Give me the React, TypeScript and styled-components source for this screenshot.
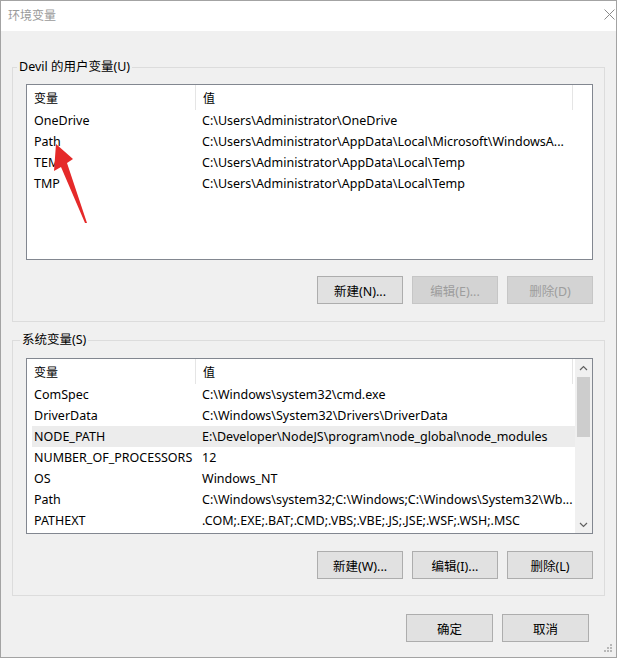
import React from "react";
import styled, { createGlobalStyle } from "styled-components";

const GlobalStyle = createGlobalStyle`
  html, body { margin: 0; padding: 0; background: #ffffff; }
  body { font-family: "Noto Sans", "Noto Sans CJK SC", sans-serif; font-size: 12.5px; color: #000; }
  * { box-sizing: border-box; }
`;

const Window = styled.div`
  position: relative;
  width: 617px;
  height: 658px;
  border: 1px solid #a3a3a3;
  background: #f0f0f0;
  display: flex;
  flex-direction: column;
`;

const TitleBar = styled.div`
  height: 30px;
  background: #ffffff;
  display: flex;
  align-items: center;
  justify-content: space-between;
  padding: 0 1px 3px 7px;
`;

const Title = styled.span`
  color: #9a9a9a;
  font-size: 12px;
  font-family: "Noto Sans CJK SC", sans-serif;
`;

const Body = styled.div`
  display: flex;
  flex-direction: column;
  padding: 28px 11px 0 11px;
`;

const Group = styled.fieldset<{ $gapTop?: number }>`
  margin: ${(p) => p.$gapTop ?? 0}px 0 0 0;
  padding: 0;
  min-width: 0;
  border: 1px solid #dcdcdc;
`;

const Legend = styled.legend<{ $indent: number }>`
  margin-left: ${(p) => p.$indent}px;
  padding: 0 2px;
  line-height: 16px;
  font-size: 12.5px;
  font-family: "Noto Sans", "Noto Sans CJK SC", sans-serif;
`;

const GroupInner = styled.div<{ $top: number; $btnGap: number; $bottom: number }>`
  padding: ${(p) => p.$top}px 11px ${(p) => p.$bottom}px 13px;
  display: flex;
  flex-direction: column;
  gap: ${(p) => p.$btnGap}px;
`;

const ListView = styled.div`
  height: 176px;
  border: 1px solid #828790;
  background: #ffffff;
  display: flex;
  overflow: hidden;
`;

const ListContent = styled.div`
  flex: 1;
  min-width: 0;
  display: flex;
  flex-direction: column;
`;

const Header = styled.div`
  height: 25px;
  display: grid;
  grid-template-columns: 169px 377px;
`;

const HeaderCell = styled.div`
  padding-left: 7px;
  border-right: 1px solid #e5e5e5;
  display: flex;
  align-items: center;
  font-family: "Noto Sans CJK SC", sans-serif;
  font-size: 12px;
`;

const Row = styled.div<{ $selected?: boolean }>`
  height: 21px;
  margin-left: 5px;
  display: grid;
  grid-template-columns: 164px 1fr;
  align-items: center;
  background: ${(p) => (p.$selected ? "#ececec" : "transparent")};
  white-space: nowrap;
`;

const NameCell = styled.div`
  padding-left: 2px;
  overflow: hidden;
`;

const ValueCell = styled.div`
  padding-left: 6px;
  overflow: hidden;
`;

const ScrollBar = styled.div`
  width: 17px;
  background: #f0f0f0;
  display: flex;
  flex-direction: column;
`;

const ScrollArrow = styled.div`
  height: 17px;
  display: flex;
  align-items: center;
  justify-content: center;
`;

const ScrollTrack = styled.div`
  flex: 1;
  padding: 1px 2px 0 2px;
`;

const Thumb = styled.div`
  height: 60px;
  background: #cdcdcd;
`;

const ButtonRow = styled.div`
  display: flex;
  justify-content: flex-end;
  gap: 9px;
`;

const Button = styled.button<{ $width?: number }>`
  width: ${(p) => p.$width ?? 86}px;
  height: 28px;
  margin: 0;
  padding: 0;
  border: 1px solid #adadad;
  background: #e1e1e1;
  color: #000;
  font-size: 12.5px;
  font-family: "Noto Sans", "Noto Sans CJK SC", sans-serif;
  &:disabled {
    background: #d3d3d3;
    border-color: #c6c6c6;
    color: #9d9d9d;
  }
`;

const Footer = styled.div`
  display: flex;
  justify-content: flex-end;
  gap: 9px;
  margin-top: 18px;
  padding-right: 16px;
`;

const Grip = styled.svg`
  position: absolute;
  right: 3px;
  bottom: 4px;
`;

const Arrow = styled.svg`
  position: absolute;
  left: 48px;
  top: 138px;
`;

type Item = { name: string; value: string };

const userVars: Item[] = [
  { name: "OneDrive", value: "C:\\Users\\Administrator\\OneDrive" },
  { name: "Path", value: "C:\\Users\\Administrator\\AppData\\Local\\Microsoft\\WindowsA..." },
  { name: "TEMP", value: "C:\\Users\\Administrator\\AppData\\Local\\Temp" },
  { name: "TMP", value: "C:\\Users\\Administrator\\AppData\\Local\\Temp" },
];

const sysVars: Item[] = [
  { name: "ComSpec", value: "C:\\Windows\\system32\\cmd.exe" },
  { name: "DriverData", value: "C:\\Windows\\System32\\Drivers\\DriverData" },
  { name: "NODE_PATH", value: "E:\\Developer\\NodeJS\\program\\node_global\\node_modules" },
  { name: "NUMBER_OF_PROCESSORS", value: "12" },
  { name: "OS", value: "Windows_NT" },
  { name: "Path", value: "C:\\Windows\\system32;C:\\Windows;C:\\Windows\\System32\\Wb..." },
  { name: "PATHEXT", value: ".COM;.EXE;.BAT;.CMD;.VBS;.VBE;.JS;.JSE;.WSF;.WSH;.MSC" },
];

const Chevron = ({ up }: { up?: boolean }) => (
  <svg width="9" height="6" viewBox="0 0 9 6">
    <path
      d={up ? "M1 5 L4.5 1.5 L8 5" : "M1 1 L4.5 4.5 L8 1"}
      fill="none"
      stroke="#606060"
      strokeWidth="1.2"
    />
  </svg>
);

export default function App() {
  return (
    <>
      <GlobalStyle />
      <Window>
        <TitleBar>
          <Title>环境变量</Title>
          <svg width="11" height="11" viewBox="0 0 11 11">
            <path d="M0.5 0.5 L10.5 10.5 M10.5 0.5 L0.5 10.5" stroke="#8a8a8a" strokeWidth="1" />
          </svg>
        </TitleBar>
        <Body>
          <Group>
            <Legend $indent={4}>Devil 的用户变量(U)</Legend>
            <GroupInner $top={9} $btnGap={16} $bottom={17}>
              <ListView>
                <ListContent>
                  <Header>
                    <HeaderCell>变量</HeaderCell>
                    <HeaderCell>值</HeaderCell>
                  </Header>
                  {userVars.map((v) => (
                    <Row key={v.name}>
                      <NameCell>{v.name}</NameCell>
                      <ValueCell>{v.value}</ValueCell>
                    </Row>
                  ))}
                </ListContent>
              </ListView>
              <ButtonRow>
                <Button>新建(N)...</Button>
                <Button disabled>编辑(E)...</Button>
                <Button disabled>删除(D)</Button>
              </ButtonRow>
            </GroupInner>
          </Group>
          <Group $gapTop={10}>
            <Legend $indent={7}>系统变量(S)</Legend>
            <GroupInner $top={10} $btnGap={17} $bottom={16}>
              <ListView>
                <ListContent>
                  <Header>
                    <HeaderCell>变量</HeaderCell>
                    <HeaderCell>值</HeaderCell>
                  </Header>
                  {sysVars.map((v) => (
                    <Row key={v.name} $selected={v.name === "NODE_PATH"}>
                      <NameCell>{v.name}</NameCell>
                      <ValueCell>{v.value}</ValueCell>
                    </Row>
                  ))}
                </ListContent>
                <ScrollBar>
                  <ScrollArrow>
                    <Chevron up />
                  </ScrollArrow>
                  <ScrollTrack>
                    <Thumb />
                  </ScrollTrack>
                  <ScrollArrow>
                    <Chevron />
                  </ScrollArrow>
                </ScrollBar>
              </ListView>
              <ButtonRow>
                <Button>新建(W)...</Button>
                <Button>编辑(I)...</Button>
                <Button>删除(L)</Button>
              </ButtonRow>
            </GroupInner>
          </Group>
          <Footer>
            <Button $width={87}>确定</Button>
            <Button $width={87}>取消</Button>
          </Footer>
        </Body>
        <Grip width="9" height="9" viewBox="0 0 9 9">
          <g fill="#b8b8b8">
            <rect x="6" y="0" width="2" height="2" />
            <rect x="3" y="3" width="2" height="2" />
            <rect x="6" y="3" width="2" height="2" />
            <rect x="0" y="6" width="2" height="2" />
            <rect x="3" y="6" width="2" height="2" />
            <rect x="6" y="6" width="2" height="2" />
          </g>
        </Grip>
        <Arrow width="45" height="90" viewBox="48 138 45 90">
          <polygon
            points="55,143 72,158 66,162 86,222 84,222 60,166 53,170"
            fill="#e52a2a"
          />
        </Arrow>
      </Window>
    </>
  );
}
